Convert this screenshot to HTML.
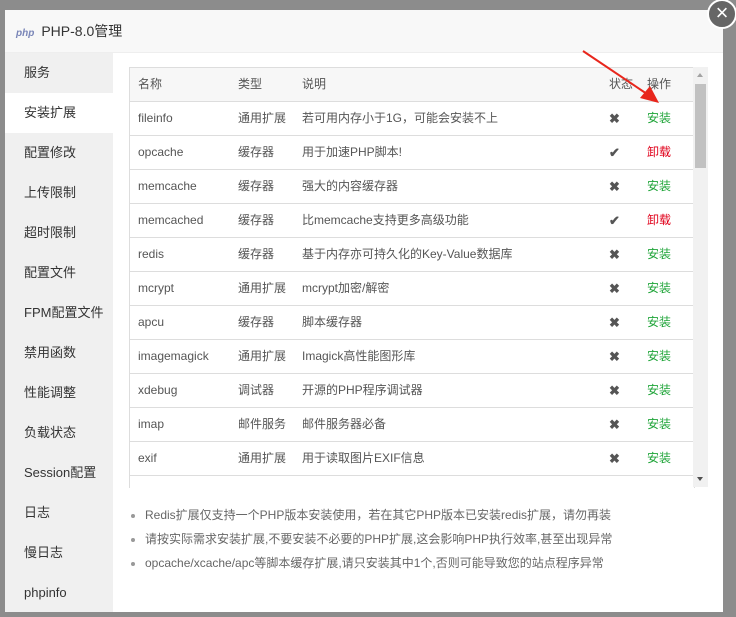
<html><head><style>
body{margin:0;width:736px;height:617px;background:#8c8c8c;font-family:"Liberation Sans","Noto Sans CJK SC",sans-serif;position:relative;overflow:hidden;color:#555}
.dlg{position:absolute;left:5px;top:10px;width:718px;height:602px;background:#fff}
.hd{height:42px;background:#f8f8f8;border-bottom:1px solid #eee;font-size:14px;color:#333;line-height:42px}
.hd i{font-style:italic;font-weight:bold;color:#7a86b8;font-size:10px;margin:0 7px 0 11px}
.side{position:absolute;left:0;top:43px;width:108px;bottom:0;background:#f0f0f0}
.side div{height:40px;line-height:40px;padding-left:19px;font-size:13px;color:#333}
.side .on{background:#fff}
.tbl{position:absolute;left:124px;top:57px;width:564px;height:420px;border:1px solid #ddd;border-bottom:none;overflow:hidden}
table{border-collapse:collapse;width:564px;font-size:12px}
td{height:33px;line-height:33px;border-bottom:1px solid #ddd;padding:0 0 0 8px;color:#555;vertical-align:middle;white-space:nowrap}
td span{display:inline-block;line-height:33px;vertical-align:top}
tr:first-child td{background:#f7f7f7}
.g{color:#20a53a}.r{color:#e0001a}
.x{font-weight:bold;color:#555;font-size:13px}
.sb{position:absolute;left:688px;top:57px;width:15px;height:420px;background:#f1f1f1}
.sb .th{position:absolute;left:2px;top:17px;width:11px;height:84px;background:#c1c1c1}
.sb .up,.sb .dn{position:absolute;left:4px;width:0;height:0;border-left:3.5px solid transparent;border-right:3.5px solid transparent}
.sb .up{top:6px;border-bottom:4px solid #a3a3a3}
.sb .dn{bottom:6px;border-top:4px solid #505050}
ul{position:absolute;left:120px;top:493px;margin:0;padding-left:20px;font-size:12px;color:#666}
li{height:24px;line-height:24px}
li::marker{color:#999}
.cl{position:absolute;left:707px;top:-1px;width:30px;height:30px;border-radius:50%;background:#666;border:2px solid #fff;box-sizing:border-box;color:#fff;text-align:center;line-height:24px;font-size:22px}
</style></head><body>
<div class="dlg">
<div class="hd"><i>php</i>PHP-8.0管理</div>
<div class="side"><div>服务</div><div class="on">安装扩展</div><div>配置修改</div><div>上传限制</div><div>超时限制</div><div>配置文件</div><div>FPM配置文件</div><div>禁用函数</div><div>性能调整</div><div>负载状态</div><div>Session配置</div><div>日志</div><div>慢日志</div><div>phpinfo</div></div>
<div class="tbl"><table>
<colgroup><col style="width:100px"><col style="width:64px"><col style="width:307px"><col style="width:38px"><col></colgroup>
<tr><td>名称</td><td>类型</td><td>说明</td><td>状态</td><td>操作</td></tr>
<tr><td><span>fileinfo</span></td><td>通用扩展</td><td>若可用内存小于1G，可能会安装不上</td><td class="x">✖</td><td class="g">安装</td></tr>
<tr><td><span>opcache</span></td><td>缓存器</td><td>用于加速PHP脚本!</td><td class="x">✔</td><td class="r">卸载</td></tr>
<tr><td><span>memcache</span></td><td>缓存器</td><td>强大的内容缓存器</td><td class="x">✖</td><td class="g">安装</td></tr>
<tr><td><span>memcached</span></td><td>缓存器</td><td>比memcache支持更多高级功能</td><td class="x">✔</td><td class="r">卸载</td></tr>
<tr><td><span>redis</span></td><td>缓存器</td><td>基于内存亦可持久化的Key-Value数据库</td><td class="x">✖</td><td class="g">安装</td></tr>
<tr><td><span>mcrypt</span></td><td>通用扩展</td><td>mcrypt加密/解密</td><td class="x">✖</td><td class="g">安装</td></tr>
<tr><td><span>apcu</span></td><td>缓存器</td><td>脚本缓存器</td><td class="x">✖</td><td class="g">安装</td></tr>
<tr><td><span>imagemagick</span></td><td>通用扩展</td><td>Imagick高性能图形库</td><td class="x">✖</td><td class="g">安装</td></tr>
<tr><td><span>xdebug</span></td><td>调试器</td><td>开源的PHP程序调试器</td><td class="x">✖</td><td class="g">安装</td></tr>
<tr><td><span>imap</span></td><td>邮件服务</td><td>邮件服务器必备</td><td class="x">✖</td><td class="g">安装</td></tr>
<tr><td><span>exif</span></td><td>通用扩展</td><td>用于读取图片EXIF信息</td><td class="x">✖</td><td class="g">安装</td></tr>
<tr><td>&nbsp;</td><td></td><td></td><td></td><td></td></tr>
</table></div>
<div class="sb"><div class="up"></div><div class="th"></div><div class="dn"></div></div>
<ul><li>Redis扩展仅支持一个PHP版本安装使用，若在其它PHP版本已安装redis扩展，请勿再装</li><li>请按实际需求安装扩展,不要安装不必要的PHP扩展,这会影响PHP执行效率,甚至出现异常</li><li>opcache/xcache/apc等脚本缓存扩展,请只安装其中1个,否则可能导致您的站点程序异常</li></ul>
</div>
<svg style="position:absolute;left:580px;top:48px" width="84" height="60"><line x1="3" y1="3" x2="70" y2="48" stroke="#e8261c" stroke-width="2"/><polygon points="79,55 60,50 70,38" fill="#e8261c"/></svg>
<div class="cl">×</div>
</body></html>
